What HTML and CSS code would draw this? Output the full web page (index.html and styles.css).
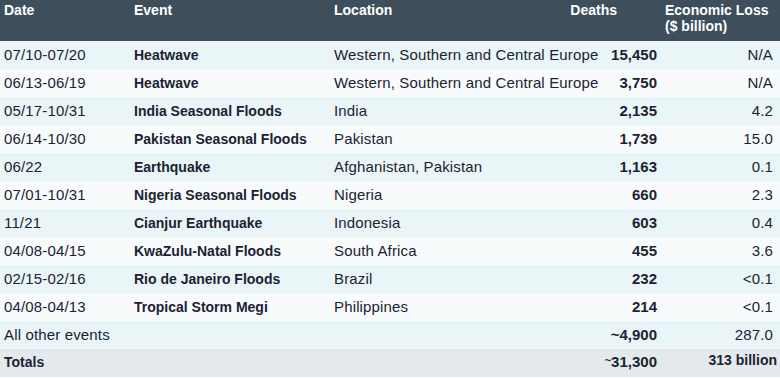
FILE: index.html
```html
<!DOCTYPE html>
<html lang="en">
<head>
    <meta charset="UTF-8">
    <meta name="viewport" content="width=device-width, initial-scale=1.0">
    <title>Deadliest Events</title>
    <link rel="stylesheet" href="styles.css">
</head>
<body>
    <table class="events">
        <colgroup>
            <col class="col-date">
            <col class="col-event">
            <col class="col-location">
            <col class="col-deaths">
            <col class="col-loss">
        </colgroup>
        <thead>
            <tr>
                <th>Date</th>
                <th>Event</th>
                <th>Location</th>
                <th class="deaths-head">Deaths</th>
                <th class="loss-head">Economic Loss<br>($ billion)</th>
            </tr>
        </thead>
        <tbody>
            <tr>
                <td>07/10-07/20</td>
                <td class="event">Heatwave</td>
                <td>Western, Southern and Central Europe</td>
                <td class="num">15,450</td>
                <td class="loss">N/A</td>
            </tr>
            <tr>
                <td>06/13-06/19</td>
                <td class="event">Heatwave</td>
                <td>Western, Southern and Central Europe</td>
                <td class="num">3,750</td>
                <td class="loss">N/A</td>
            </tr>
            <tr>
                <td>05/17-10/31</td>
                <td class="event">India Seasonal Floods</td>
                <td>India</td>
                <td class="num">2,135</td>
                <td class="loss">4.2</td>
            </tr>
            <tr>
                <td>06/14-10/30</td>
                <td class="event">Pakistan Seasonal Floods</td>
                <td>Pakistan</td>
                <td class="num">1,739</td>
                <td class="loss">15.0</td>
            </tr>
            <tr>
                <td>06/22</td>
                <td class="event">Earthquake</td>
                <td>Afghanistan, Pakistan</td>
                <td class="num">1,163</td>
                <td class="loss">0.1</td>
            </tr>
            <tr>
                <td>07/01-10/31</td>
                <td class="event">Nigeria Seasonal Floods</td>
                <td>Nigeria</td>
                <td class="num">660</td>
                <td class="loss">2.3</td>
            </tr>
            <tr>
                <td>11/21</td>
                <td class="event">Cianjur Earthquake</td>
                <td>Indonesia</td>
                <td class="num">603</td>
                <td class="loss">0.4</td>
            </tr>
            <tr>
                <td>04/08-04/15</td>
                <td class="event">KwaZulu-Natal Floods</td>
                <td>South Africa</td>
                <td class="num">455</td>
                <td class="loss">3.6</td>
            </tr>
            <tr>
                <td>02/15-02/16</td>
                <td class="event">Rio de Janeiro Floods</td>
                <td>Brazil</td>
                <td class="num">232</td>
                <td class="loss">&lt;0.1</td>
            </tr>
            <tr>
                <td>04/08-04/13</td>
                <td class="event">Tropical Storm Megi</td>
                <td>Philippines</td>
                <td class="num">214</td>
                <td class="loss">&lt;0.1</td>
            </tr>
            <tr>
                <td colspan="3">All other events</td>
                <td class="num">~4,900</td>
                <td class="loss">287.0</td>
            </tr>
            <tr class="totals">
                <td colspan="3" class="event">Totals</td>
                <td class="num"><span class="approx">~</span>31,300</td>
                <td class="loss total-loss">313 billion</td>
            </tr>
        </tbody>
    </table>
</body>
</html>
```

FILE: styles.css
```css
body {
    margin: 0;
    font-family: "Liberation Sans", Arial, sans-serif;
    background-color: #ffffff;
    color: #1d2232;
}
.events {
    width: 780px;
    border-collapse: collapse;
    table-layout: fixed;
    font-size: 15px;
}
.col-date {
    width: 130px;
}
.col-event {
    width: 200px;
}
.col-location {
    width: 230px;
}
.col-deaths {
    width: 100px;
}
.col-loss {
    width: 120px;
}
thead tr {
    background-color: #3e4f5b;
    height: 41px;
}
th {
    color: #ffffff;
    font-size: 14px;
    font-weight: bold;
    text-align: left;
    vertical-align: top;
    line-height: 16px;
    padding: 2px 0 0 4px;
}
th.deaths-head {
    text-align: right;
    padding-right: 43px;
    white-space: nowrap;
}
th.loss-head {
    padding-left: 5px;
    white-space: nowrap;
}
td {
    height: 28px;
    padding: 0 0 0 4px;
    vertical-align: middle;
    white-space: nowrap;
    line-height: 16px;
    letter-spacing: 0.15px;
}
tbody tr:nth-child(odd) {
    background-color: #e9f5f7;
}
tbody tr:nth-child(even) {
    background-color: #f7fbfb;
}
tbody tr.totals {
    background-color: #e4eaec;
}
.totals td {
    height: 25px;
    padding-bottom: 3px;
}
.event {
    font-weight: bold;
    font-size: 14px;
    letter-spacing: 0;
}
.num {
    font-weight: bold;
    text-align: right;
    padding: 0 3px 0 0;
    letter-spacing: 0;
}
.approx {
    font-size: 11px;
    vertical-align: 3px;
    line-height: 0;
}
.loss {
    text-align: right;
    padding: 0 7px 0 0;
}
.totals .total-loss {
    font-weight: bold;
    font-size: 14px;
    letter-spacing: 0;
    vertical-align: top;
    height: 24px;
    padding: 3px 3px 0 0;
}
```
